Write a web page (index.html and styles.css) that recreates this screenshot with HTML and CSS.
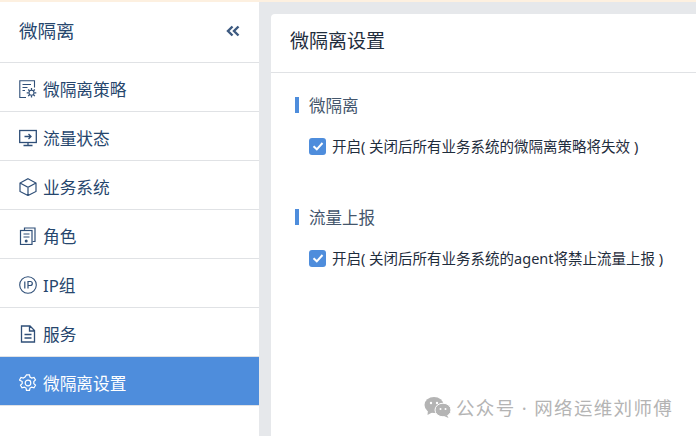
FILE: index.html
```html
<!DOCTYPE html>
<html lang="zh">
<head>
<meta charset="utf-8">
<title>微隔离设置</title>
<link rel="stylesheet" href="styles.css">
</head>
<body>
<div class="topband"></div>
<div class="app">
  <aside class="sidebar">
    <div class="side-head">
      <span class="side-title">微隔离</span>
      <svg class="collapse" width="14" height="12" viewBox="0 0 14 12"><path d="M6.500 1.500 2 6l4.500 4.500M12.500 1.500 8 6l4.500 4.500" fill="none" stroke="#3d5a80" stroke-width="2.400"/></svg>
    </div>
    <nav class="nav">
      <a class="nav-item">
        <svg class="ico" viewBox="0 0 18 18" fill="none" stroke="currentColor" stroke-width="1.100"><path d="M7 17.500H.8V.8h14.700V7.500"/><path d="M3.500 4.500h8.500M3.500 7.500h5M3.500 10.500h2.500" stroke-width="1"/><circle cx="12.500" cy="12.800" r="2.500"/><path d="M12.500 8v2M12.500 15.500v2M7.700 12.800h2M15.300 12.800h2M9.200 9.500l1.300 1.300M14.500 14.800l1.300 1.300M9.200 16.100l1.300-1.300M14.500 10.800l1.300-1.300" stroke-width="1.300"/></svg>
        <span>微隔离策略</span>
      </a>
      <a class="nav-item">
        <svg class="ico" viewBox="0 0 18 18" fill="none" stroke="currentColor" stroke-width="1.300"><rect x=".7" y="1.500" width="16.600" height="12"/><path d="M5.500 7.500H12M9.500 5l2.500 2.500L9.500 10M9 13.500V16.500M4.500 16.500h9"/></svg>
        <span>流量状态</span>
      </a>
      <a class="nav-item">
        <svg class="ico" viewBox="0 0 18 18" fill="none" stroke="currentColor" stroke-width="1.200"><path d="M9 .8 17 5v8.500L9 17.500 1 13.500V5zM1 5 9 9.300 17 5M9 9.300v8.200"/></svg>
        <span>业务系统</span>
      </a>
      <a class="nav-item">
        <svg class="ico" viewBox="0 0 18 18" fill="none" stroke="currentColor" stroke-width="1.200"><path d="M5.500 3V1h10.500V14.500H13.500"/><rect x="1.500" y="3.500" width="11.500" height="14"/><path d="M4.500 7h6M4.500 10h6"/><circle cx="7.200" cy="14" r=".9" fill="currentColor"/></svg>
        <span>角色</span>
      </a>
      <a class="nav-item">
        <svg class="ico" viewBox="0 0 18 18" fill="none" stroke="currentColor" stroke-width="1.100"><circle cx="9" cy="9" r="8.300"/><path d="M5.800 5.500v7M9 12.500v-7h2.300a2 2 0 0 1 0 4H9" stroke-width="1.200"/></svg>
        <span>IP组</span>
      </a>
      <a class="nav-item">
        <svg class="ico" viewBox="0 0 18 18" fill="none" stroke="currentColor" stroke-width="1.300"><path d="M2.500 1h8.500l4.500 4.500V17h-13zM10.500 1v5h5M5.500 9.500h7M5.500 13h7"/></svg>
        <span>服务</span>
      </a>
      <a class="nav-item active">
        <svg class="ico" viewBox="0 0 18 18" fill="none" stroke="currentColor" stroke-width="1.200"><circle cx="9" cy="9" r="2.800"/><path d="M7.500 .8h3l.5 2.300 1.700 1 2.300-.7 1.500 2.600-1.700 1.600v2l1.700 1.600-1.500 2.600-2.300-.7-1.700 1-.5 2.300h-3l-.5-2.300-1.700-1-2.300.7-1.500-2.600 1.700-1.600v-2L.5 6l1.500-2.600 2.300.7 1.700-1z"/></svg>
        <span>微隔离设置</span>
      </a>
    </nav>
  </aside>
  <main class="content">
    <section class="card">
      <header class="card-head">微隔离设置</header>
      <div class="card-body">
        <div class="group">
          <h2 class="group-title"><span class="group-label">微隔离</span></h2>
          <label class="check">
            <span class="box"><svg width="16" height="16" viewBox="0 0 16 16"><path d="M3.500 8.200 6.800 11.300 12.500 5" fill="none" stroke="#fff" stroke-width="2"/></svg></span>
            <span class="check-text">开启( 关闭后所有业务系统的微隔离策略将失效 )</span>
          </label>
        </div>
        <div class="group">
          <h2 class="group-title"><span class="group-label">流量上报</span></h2>
          <label class="check">
            <span class="box"><svg width="16" height="16" viewBox="0 0 16 16"><path d="M3.500 8.200 6.800 11.300 12.500 5" fill="none" stroke="#fff" stroke-width="2"/></svg></span>
            <span class="check-text">开启( 关闭后所有业务系统的agent将禁止流量上报 )</span>
          </label>
        </div>
      </div>
    </section>
  </main>
</div>
<div class="watermark">
  <svg width="28" height="22" viewBox="0 0 28 22"><ellipse cx="10" cy="9" rx="9.500" ry="8" fill="#b4b4b4"/><path d="M4 14 3.500 19 9 16z" fill="#b4b4b4"/><ellipse cx="19" cy="14" rx="8" ry="6.800" fill="#b4b4b4" stroke="#fff" stroke-width="1"/><path d="M23 19l1.500 3-4.500-2z" fill="#b4b4b4"/><circle cx="7" cy="7" r="1.200" fill="#fff"/><circle cx="13" cy="7" r="1.200" fill="#fff"/><circle cx="16.500" cy="13" r="1" fill="#fff"/><circle cx="21.500" cy="13" r="1" fill="#fff"/></svg>
  <span>公众号 · 网络运维刘师傅</span>
</div>
</body>
</html>
```
FILE: styles.css
```css
* { box-sizing: border-box; }
html, body { margin: 0; height: 100%; overflow: hidden; }
body {
  position: relative;
  background: #e6e8eb;
  font-family: "Noto Sans", "Noto Sans CJK SC", "Liberation Sans", sans-serif;
  display: flex;
  flex-direction: column;
}
.topband { height: 2px; background: #fdf0e0; flex: none; }
.app { flex: 1; display: flex; min-height: 0; }
.sidebar { width: 259px; flex: none; background: #fff; }
.side-head {
  height: 61px;
  border-bottom: 1px solid #e0e2e5;
  display: flex;
  align-items: center;
  justify-content: space-between;
  padding: 0 19px 2px;
}
.side-title { font-size: 18.500px; color: #26466d; line-height: 1; }
.nav { display: flex; flex-direction: column; }
.nav-item {
  height: 49px;
  display: flex;
  align-items: center;
  gap: 6px;
  padding: 4px 0 0 19px;
  border-bottom: 1px solid #e0e2e5;
  color: #26466d;
  font-size: 16.700px;
}
.nav-item .ico { width: 18px; height: 18px; flex: none; color: #2f4f78; }
.nav-item.active { background: #4e8ddc; color: #fff; }
.nav-item.active .ico { color: #fff; }
.content { flex: 1; padding: 12px 0 0 12px; min-width: 0; }
.card { background: #fff; height: 100%; border-top-left-radius: 4px; }
.card-head {
  height: 59px;
  border-bottom: 1px solid #e0e2e5;
  padding: 0 0 6px 19px;
  display: flex;
  align-items: center;
  font-size: 19px;
  color: #1f2d3d;
}
.card-body { padding: 24px 0 0 24px; display: flex; flex-direction: column; gap: 53px; }
.group-title {
  margin: 0 0 23px;
  height: 16px;
  border-left: 4px solid #4e8ddc;
  padding: 0 0 0 10px;
  font-size: 16.500px;
  font-weight: 400;
  line-height: 18px;
  color: #44566c;
}
.group-label { display: block; }
.check {
  display: flex;
  align-items: center;
  gap: 6px;
  margin-left: 14px;
  height: 20px;
  font-size: 14.500px;
  color: #1f2d3d;
  white-space: nowrap;
}
.check-text { padding-bottom: 2px; }
.box {
  width: 17px;
  height: 17px;
  flex: none;
  background: #4e8ddc;
  border-radius: 3px;
  display: flex;
  align-items: center;
  justify-content: center;
}
.watermark {
  position: absolute;
  left: 424px;
  top: 394px;
  display: flex;
  align-items: center;
  gap: 4px;
  color: #b4b4b4;
  font-size: 18.500px;
  letter-spacing: 1.350px;
  white-space: nowrap;
}
```
